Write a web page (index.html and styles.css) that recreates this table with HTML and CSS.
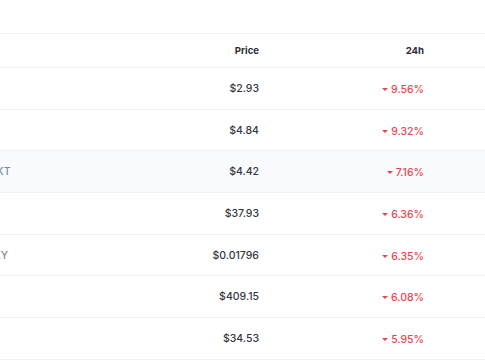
FILE: index.html
```html
<!DOCTYPE html>
<html>
<head>
<meta charset="utf-8">
<link rel="stylesheet" href="styles.css">
</head>
<body>
<div class="spacer"></div>
<div class="table">
  <div class="row head">
    <div class="cell name"></div>
    <div class="cell num">Price</div>
    <div class="cell num">24h</div>
    <div class="cell"></div>
  </div>
  <div class="row">
    <div class="cell name"></div>
    <div class="cell num">$2.93</div>
    <div class="cell num"><span class="down"><i class="caret"></i>9.56%</span></div>
    <div class="cell"></div>
  </div>
  <div class="row">
    <div class="cell name"></div>
    <div class="cell num">$4.84</div>
    <div class="cell num"><span class="down"><i class="caret"></i>9.32%</span></div>
    <div class="cell"></div>
  </div>
  <div class="row hover">
    <div class="cell name"><span class="sym sym-okt">OKT</span></div>
    <div class="cell num">$4.42</div>
    <div class="cell num"><span class="down"><i class="caret"></i>7.16%</span></div>
    <div class="cell"></div>
  </div>
  <div class="row">
    <div class="cell name"></div>
    <div class="cell num">$37.93</div>
    <div class="cell num"><span class="down"><i class="caret"></i>6.36%</span></div>
    <div class="cell"></div>
  </div>
  <div class="row">
    <div class="cell name"><span class="sym sym-y">AXY</span></div>
    <div class="cell num">$0.01796</div>
    <div class="cell num"><span class="down"><i class="caret"></i>6.35%</span></div>
    <div class="cell"></div>
  </div>
  <div class="row">
    <div class="cell name"></div>
    <div class="cell num">$409.15</div>
    <div class="cell num"><span class="down"><i class="caret"></i>6.08%</span></div>
    <div class="cell"></div>
  </div>
  <div class="row">
    <div class="cell name"></div>
    <div class="cell num">$34.53</div>
    <div class="cell num"><span class="down"><i class="caret"></i>5.95%</span></div>
    <div class="cell"></div>
  </div>
</div>
</body>
</html>
```

FILE: styles.css
```css
html, body {
  margin: 0;
  padding: 0;
  background: #ffffff;
  overflow: hidden;
}
body {
  width: 485px;
  height: 360px;
  font-family: Inter, "Noto Sans", sans-serif;
  color: #34373f;
}
.spacer {
  height: 33px;
}
.table {
  border-top: 1px solid #eff2f5;
}
.row {
  display: grid;
  grid-template-columns: 109px 150px 165px 61px;
  height: 41.7px;
  box-sizing: border-box;
  border-bottom: 1px solid #eff2f5;
  align-items: center;
  font-size: 10.5px;
  font-weight: 500;
}
.row.head {
  height: 34px;
  font-size: 9.6px;
  font-weight: 700;
  color: #2a2d36;
}
.row.hover {
  background: #f8fafd;
}
.cell {
  white-space: nowrap;
}
.cell.num {
  text-align: right;
}
.sym {
  display: inline-block;
  color: #808a9d;
  font-weight: 500;
}
.sym-okt {
  margin-left: -11.5px;
}
.sym-y {
  margin-left: -14px;
}
.down {
  color: #ea4651;
  display: inline-flex;
  align-items: center;
  gap: 3px;
}
.caret {
  display: inline-block;
  width: 0;
  height: 0;
  border-left: 3px solid transparent;
  border-right: 3px solid transparent;
  border-top: 3.5px solid #ea4651;
}
```
